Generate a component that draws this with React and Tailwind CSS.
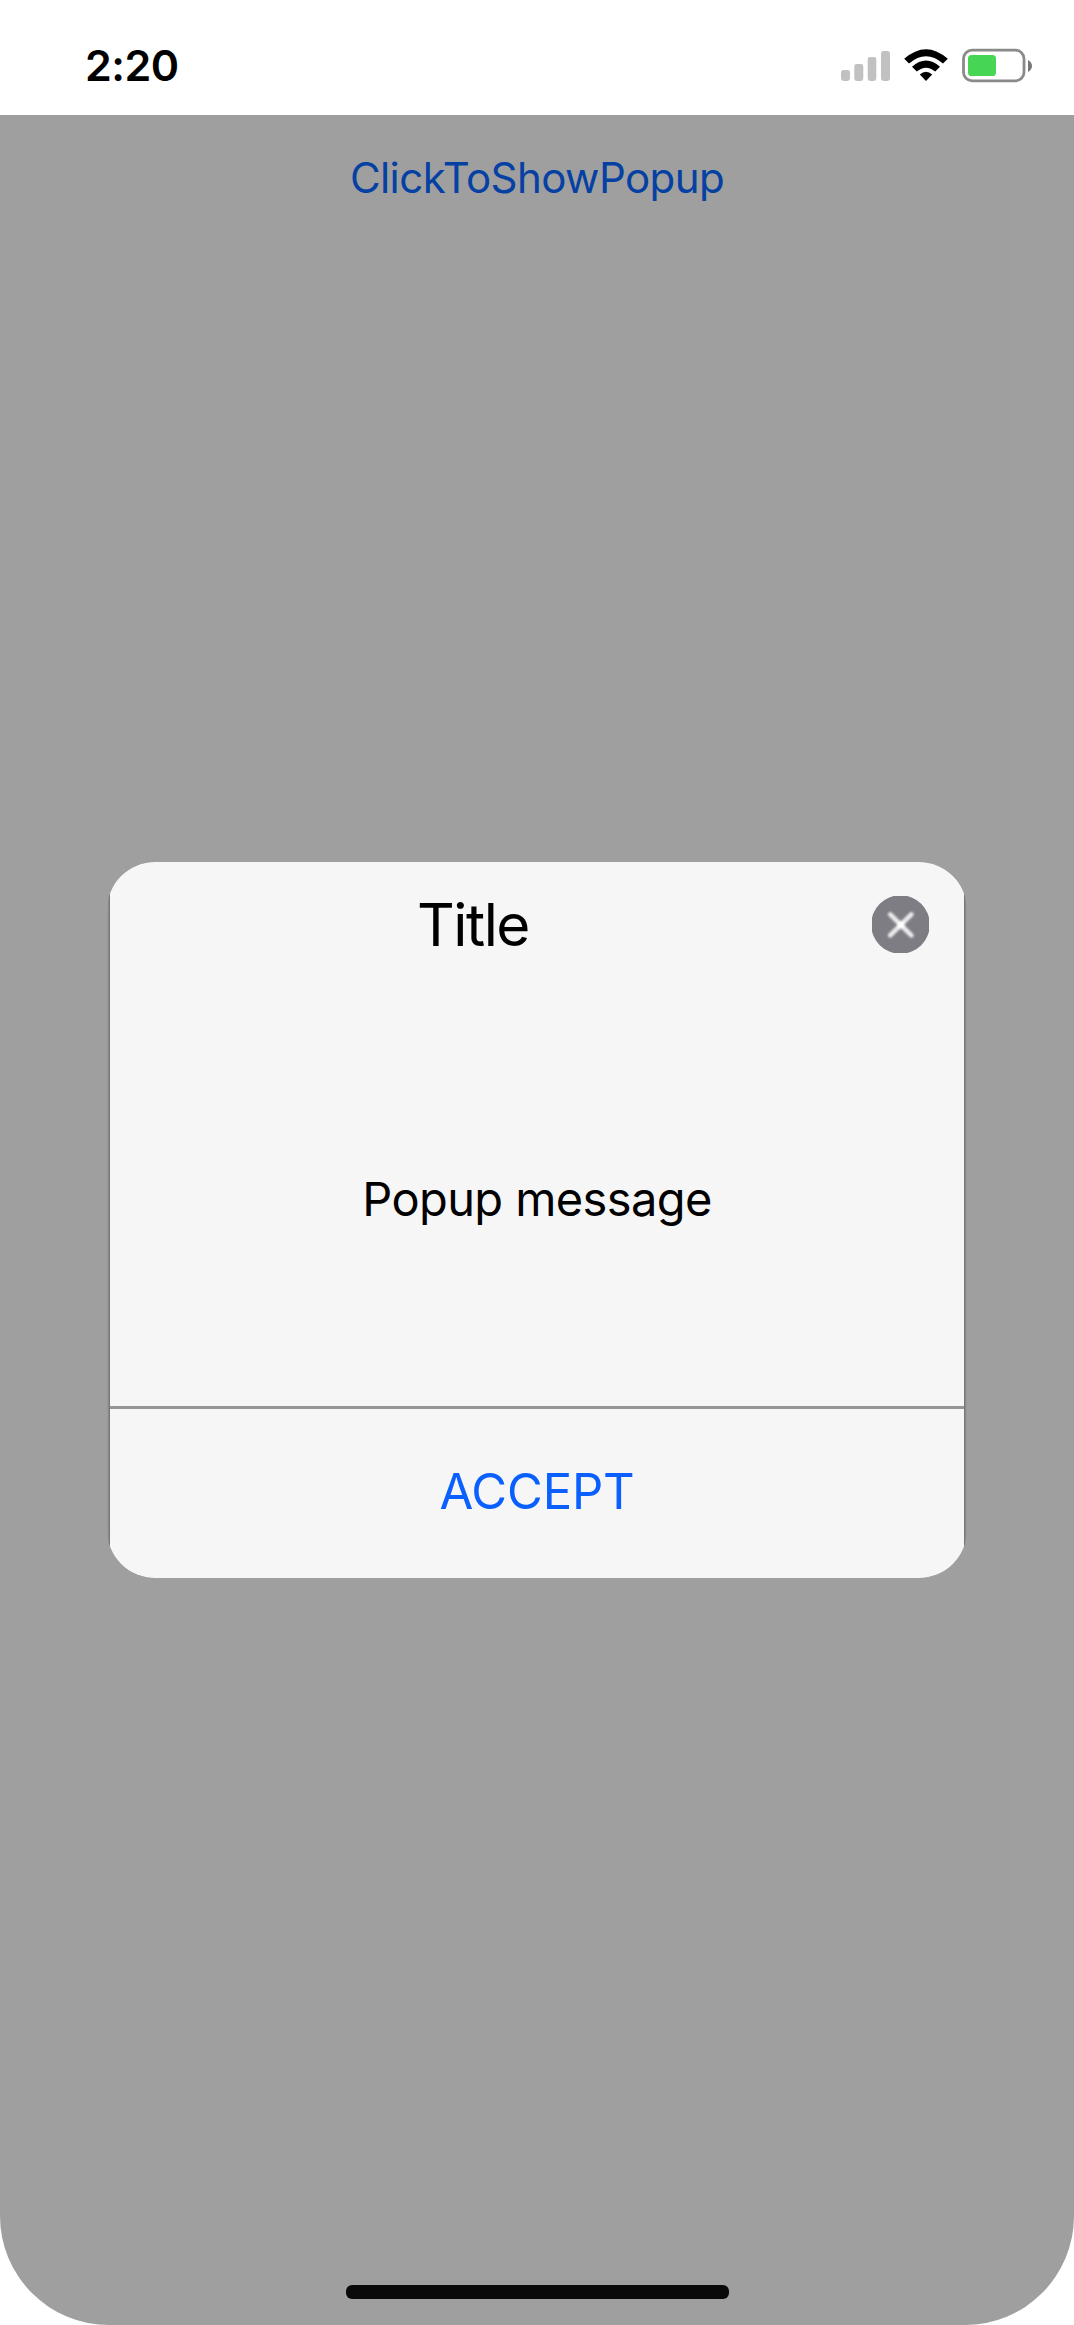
function StatusIcons() {
  return (
    <svg className="h-[36px] w-[194px]" viewBox="840 47 194 36" role="img" aria-label="Signal, Wi-Fi and battery">
      <g fill="#c1c1c1">
        <rect x="841" y="70" width="9" height="11" rx="2.4" />
        <rect x="854.3" y="64" width="9" height="17" rx="2.4" />
        <rect x="867.7" y="57" width="8.6" height="24" rx="2.4" />
        <rect x="881" y="51" width="9" height="30" rx="2.4" />
      </g>
      <path d="M904.2 58.8 Q926 39.6 947.8 58.8 L943 63.6 Q926 49 909 63.6 Z" fill="#000" />
      <path d="M912 66.8 Q926 54.4 940 66.8 L935.2 71.6 Q926 63.8 916.8 71.6 Z" fill="#000" />
      <path d="M919.8 74.6 Q926 68.8 932.2 74.6 L926 81 Z" fill="#000" />
      <rect x="963.5" y="50.2" width="60.5" height="30.6" rx="8.5" fill="none" stroke="#8a8a8a" strokeWidth="2.8" />
      <rect x="968" y="55" width="28" height="21" rx="3.6" fill="#46d654" />
      <path d="M1028 60 Q1032 62.5 1032 66 Q1032 69.5 1028 72 Z" fill="#777" />
    </svg>
  );
}

function CloseIcon() {
  return (
    <svg className="h-[57px] w-[57px]" viewBox="0 0 57 57" aria-hidden="true">
      <defs>
        <filter id="soft" x="-20%" y="-20%" width="140%" height="140%">
          <feGaussianBlur stdDeviation="1.1" />
        </filter>
      </defs>
      <circle cx="28.5" cy="28.5" r="29.3" fill="#7e7d84" />
      <g filter="url(#soft)">
        <path d="M18.2 18.4 L39.4 39.4 M39.4 18.4 L18.2 39.4" stroke="#ececee" strokeWidth="4.6" strokeLinecap="round" />
        <circle cx="28.8" cy="28.9" r="3.8" fill="#ffffff" />
      </g>
    </svg>
  );
}

export default function App() {
  return (
    <div className="flex h-[2325px] w-[1074px] flex-col overflow-hidden bg-white font-['Inter','Liberation_Sans',sans-serif] text-black">
      <header className="flex h-[115px] shrink-0 items-start justify-between pl-[85px] pr-[40px]">
        <time className="mt-[39px] text-[43px] leading-[52px] font-semibold tracking-[-0.5px]">2:20</time>
        <div className="mt-[47px]">
          <StatusIcons />
        </div>
      </header>

      <main className="flex flex-1 flex-col items-center rounded-b-[109px] bg-[#9f9f9f]">
        <button className="mt-[37px] h-[52px] text-[42px] leading-[52px] tracking-[-0.57px] whitespace-nowrap text-[#0540a3]">
          ClickToShowPopup
        </button>

        <section
          role="dialog"
          className="mt-[658px] flex h-[716px] w-[860px] flex-col overflow-hidden rounded-[48px] bg-[linear-gradient(90deg,#999_0,#999_1px,#8a8a8a_1px,#8a8a8a_2px,#777_2px,#777_858px,#8a8a8a_858px,#8a8a8a_859px,#999_859px)] px-[3px]"
        >
          <div className="flex h-[544px] flex-col bg-[#f6f6f6]">
            <div className="flex h-[125px] items-center justify-between pr-[35px]">
              <h1 className="w-[726px] text-center text-[58.5px] leading-[70px] tracking-[-1.5px]">Title</h1>
              <button aria-label="Close">
                <CloseIcon />
              </button>
            </div>
            <p className="mt-[182px] text-center text-[47px] leading-[60px] tracking-[-0.6px]">Popup message</p>
          </div>
          <div className="h-[3px] bg-[#959595]" />
          <button className="flex-1 bg-[#f6f6f6] pb-[4px] text-[49px] leading-[60px] tracking-[-0.15px] text-[#0a60ff]">
            ACCEPT
          </button>
        </section>

        <div className="mt-[707px] h-[14px] w-[383px] rounded-[6px] bg-[#0a0a0a]" />
      </main>
    </div>
  );
}
